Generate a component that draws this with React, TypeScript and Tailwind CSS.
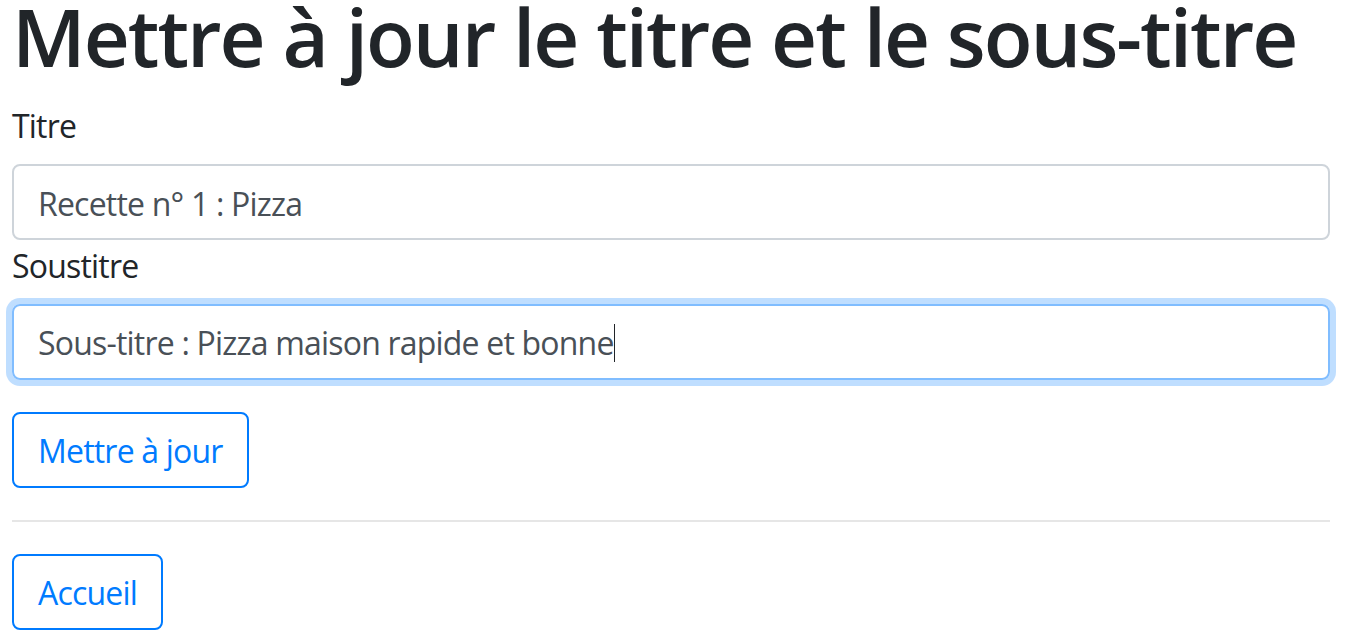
import React from "react"

const font = { fontFamily: '"Open Sans", "Noto Sans", sans-serif' }

export default function App() {
  return (
    <div className="bg-white min-h-screen px-[12px] text-[#212529] overflow-hidden tracking-[-0.8px]" style={font}>
      <h1 className="mb-[28px] text-[80px] leading-[72px] font-semibold tracking-[-2px] whitespace-nowrap">
        Mettre à jour le titre et le sous-titre
      </h1>

      <form className="w-[1318px]">
        <label className="block text-[32px] leading-[52px] mb-[12px]">Titre</label>
        <input
          type="text"
          defaultValue="Recette n° 1 : Pizza"
          readOnly
          className="block w-full h-[76px] px-[24px] pt-[2px] text-[32px] leading-[48px] tracking-[-0.8px] text-[#495057] border-2 border-[#ced4da] rounded-[8px] outline-none"
        />

        <label className="block text-[32px] leading-[52px] mb-[12px]">Soustitre</label>
        <div
          role="textbox"
          className="flex items-center w-full h-[76px] px-[24px] pt-[2px] text-[32px] leading-[48px] text-[#495057] border-2 border-[#80bdff] rounded-[8px] shadow-[0_0_0_6px_rgba(0,123,255,0.25)]"
        >
          <span className="whitespace-pre">Sous-titre : Pizza maison rapide et bonne</span>
          <span className="inline-block w-[1px] h-[38px] bg-[#212529]" />
        </div>

        <button
          type="button"
          className="mt-[32px] h-[76px] px-[24px] pt-[2px] text-[32px] leading-[48px] text-[#007bff] border-2 border-[#007bff] rounded-[8px] bg-white"
        >
          Mettre à jour
        </button>
      </form>

      <hr className="w-[1318px] my-[32px] border-0 border-t-2 border-[#e6e6e6]" />

      <button
        type="button"
        className="h-[76px] px-[24px] pt-[2px] text-[32px] leading-[48px] text-[#007bff] border-2 border-[#007bff] rounded-[8px] bg-white"
      >
        Accueil
      </button>
    </div>
  )
}
